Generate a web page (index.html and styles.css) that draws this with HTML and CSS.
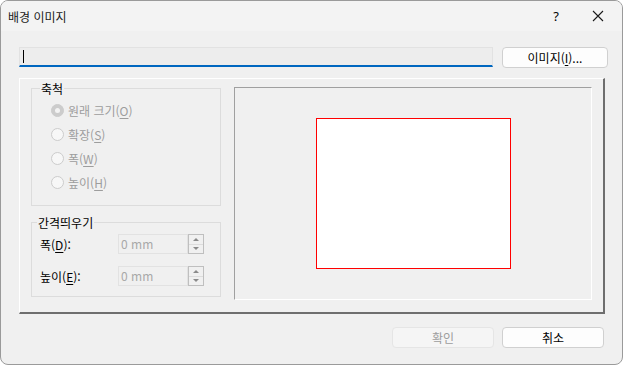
FILE: index.html
```html
<!DOCTYPE html>
<html lang="ko">
<head>
    <meta charset="UTF-8">
    <title>배경 이미지</title>
    <link rel="stylesheet" href="styles.css">
</head>
<body>
    <div class="window">
        <div class="titlebar">
            <span class="title">배경 이미지</span>
            <span class="help">?</span>
            <span class="close">
                <svg width="12" height="12" viewBox="0 0 12 12"><path d="M1 1 L11 11 M11 1 L1 11" stroke="#1a1a1a" stroke-width="1.1" fill="none"/></svg>
            </span>
        </div>

        <div class="content">
            <div class="path-row">
                <div class="path-field"><span class="caret"></span></div>
                <button class="btn">이미지(<u>I</u>)...</button>
            </div>

            <div class="panel">
                <div class="side">
                    <fieldset class="group scale">
                        <legend>축척</legend>
                        <label class="radio checked"><span class="dot"></span><span>원래 크기(<u>O</u>)</span></label>
                        <label class="radio"><span class="dot"></span><span>확장(<u>S</u>)</span></label>
                        <label class="radio"><span class="dot"></span><span>폭(<u>W</u>)</span></label>
                        <label class="radio"><span class="dot"></span><span>높이(<u>H</u>)</span></label>
                    </fieldset>

                    <fieldset class="group spacing">
                        <legend>간격띄우기</legend>
                        <div class="spin-row">
                            <span class="spin-label">폭(<u>D</u>):</span>
                            <div class="spin">
                                <div class="spin-value">0 mm</div>
                                <div class="spin-arrows"><span class="up"></span><span class="down"></span></div>
                            </div>
                        </div>
                        <div class="spin-row">
                            <span class="spin-label">높이(<u>E</u>):</span>
                            <div class="spin">
                                <div class="spin-value">0 mm</div>
                                <div class="spin-arrows"><span class="up"></span><span class="down"></span></div>
                            </div>
                        </div>
                    </fieldset>
                </div>

                <div class="preview">
                    <div class="page"></div>
                </div>
            </div>

            <div class="footer">
                <button class="btn disabled">확인</button>
                <button class="btn">취소</button>
            </div>
        </div>
    </div>
</body>
</html>
```

FILE: styles.css
```css
body {
    margin: 0;
    background: #ffffff;
    font-family: "Noto Sans CJK KR", "Noto Sans", sans-serif;
    font-size: 12px;
    color: #000;
}
u {
    text-decoration: underline;
    text-underline-offset: 2px;
}
.window {
    width: 623px;
    height: 365px;
    box-sizing: border-box;
    border: 1px solid #9a9a9a;
    border-radius: 8px;
    background: #f0f0f0;
    overflow: hidden;
}
.titlebar {
    height: 30px;
    background: #f3f3f3;
    display: flex;
    align-items: center;
    padding-left: 7px;
}
.title {
    flex: 1;
    font-size: 12px;
    color: #1a1a1a;
}
.help {
    width: 20px;
    text-align: center;
    margin-right: 26px;
    font-family: "Noto Sans", sans-serif;
    font-size: 13px;
}
.close {
    width: 12px;
    height: 12px;
    margin-right: 18px;
    display: flex;
}
.content {
    padding: 16px 0 0 18px;
}
.path-row {
    display: flex;
    height: 20px;
}
.path-field {
    width: 474px;
    box-sizing: border-box;
    border: 1px solid #e2e2e2;
    border-bottom: 2px solid #0067c0;
    background: #ededed;
    padding: 2px 3px;
}
.caret {
    display: block;
    width: 1px;
    height: 13px;
    background: #000;
}
.btn {
    width: 106px;
    height: 21px;
    margin-left: 9px;
    background: #fdfdfd;
    border: 1px solid #d0d0d0;
    border-radius: 4px;
    font-family: inherit;
    font-size: 12px;
    color: #000;
    padding: 0;
    line-height: 17px;
}
.btn.disabled {
    background: #f5f5f5;
    border-color: #e5e5e5;
    color: #9d9d9d;
}
.panel {
    margin-top: 11px;
    width: 586px;
    box-sizing: border-box;
    border-top: 1px solid #ffffff;
    border-left: 1px solid #ffffff;
    border-right: 2px solid #6e6e6e;
    border-bottom: 2px solid #6e6e6e;
    display: flex;
    gap: 13px;
    padding: 8px 11px 12px 11px;
}
.side {
    width: 190px;
    margin-top: -6px;
    display: flex;
    flex-direction: column;
    gap: 9px;
}
.group {
    margin: 0;
    border: 1px solid #dcdcdc;
    padding: 0;
}
.group legend {
    padding: 0 1px;
    line-height: 15px;
    font-weight: 400;
}
.scale {
    height: 125px;
    box-sizing: border-box;
    padding: 2px 0 0 19px;
}
.scale legend {
    margin-left: -11px;
}
.radio {
    display: flex;
    align-items: center;
    gap: 4px;
    height: 24px;
    color: #9d9d9d;
}
.dot {
    width: 11px;
    height: 11px;
    border: 1px solid #cccccc;
    border-radius: 50%;
    background: #f7f7f7;
    position: relative;
}
.radio.checked .dot {
    background: #cccccc;
}
.radio.checked .dot::after {
    content: "";
    position: absolute;
    left: 3px;
    top: 3px;
    width: 5px;
    height: 5px;
    border-radius: 50%;
    background: #f3f3f3;
}
.spacing {
    height: 82px;
    box-sizing: border-box;
    padding: 4px 16px 0 8px;
}
.spacing legend {
    margin-left: -3px;
}
.spin-row {
    display: flex;
    align-items: center;
    justify-content: space-between;
    height: 20px;
    margin-bottom: 12px;
}
.spin {
    display: flex;
    height: 20px;
}
.spin-value {
    width: 70px;
    box-sizing: border-box;
    border: 1px solid #e2e2e2;
    color: #a8a8a8;
    padding: 1px 2px;
    line-height: 16px;
}
.spin-arrows {
    width: 16px;
    box-sizing: border-box;
    border: 1px solid #bfbfbf;
    display: flex;
    flex-direction: column;
    background: #f0f0f0;
}
.spin-arrows span {
    flex: 1;
    display: flex;
    align-items: center;
    justify-content: center;
}
.spin-arrows .up {
    border-bottom: 1px solid #dcdcdc;
}
.spin-arrows .up::after {
    content: "";
    border-left: 3px solid transparent;
    border-right: 3px solid transparent;
    border-bottom: 3px solid #8a8a8a;
}
.spin-arrows .down::after {
    content: "";
    border-left: 3px solid transparent;
    border-right: 3px solid transparent;
    border-top: 3px solid #8a8a8a;
}
.preview {
    width: 358px;
    height: 213px;
    box-sizing: border-box;
    border-top: 1px solid #a0a0a0;
    border-left: 1px solid #a0a0a0;
    border-right: 1px solid #ffffff;
    border-bottom: 1px solid #ffffff;
    display: flex;
    justify-content: center;
    padding: 30px 0 0 0;
}
.page {
    width: 195px;
    height: 151px;
    box-sizing: border-box;
    border: 1px solid #ff0000;
    background: #ffffff;
}
.footer {
    display: flex;
    padding: 13px 0 0 365px;
}
.footer .btn {
    margin-left: 8px;
    width: 102px;
}
```
